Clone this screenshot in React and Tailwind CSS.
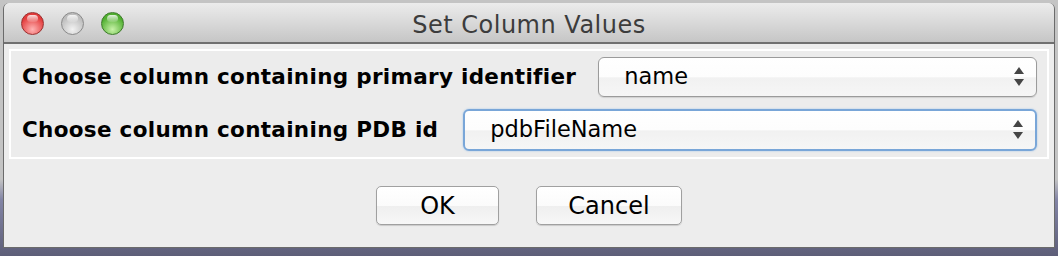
import React from "react";

const Light = ({ from, to, ring }) => (
  <span
    className={`relative block w-[23px] h-[23px] rounded-full border ${ring}`}
    style={{
      background: `radial-gradient(circle at 50% 78%, ${to} 0%, ${from} 68%)`,
    }}
  >
    <span className="absolute left-[5px] top-[2px] w-[11px] h-[7px] rounded-full bg-[linear-gradient(rgba(255,255,255,0.85),rgba(255,255,255,0.1))]" />
  </span>
);

const Arrows = () => (
  <svg width="12" height="22" viewBox="0 0 12 22" className="shrink-0">
    <path d="M6 1 L11 8 L1 8 Z" fill="#454545" />
    <path d="M1 13 L11 13 L6 20 Z" fill="#454545" />
  </svg>
);

const Combo = ({ value, focused }) => (
  <div
    className={`flex-1 flex items-center justify-between pl-[25px] pr-[11px] rounded-[6px] bg-[linear-gradient(#ffffff_0%,#fdfdfd_50%,#f1f1f1_52%,#f6f6f6_100%)] ${
      focused
        ? "h-[42px] border-2 border-[#79a6d8] shadow-[0_0_2px_#9cc0e8]"
        : "h-[40px] border border-[#9b9b9b] shadow-[0_1px_1px_rgba(0,0,0,0.12)]"
    }`}
  >
    <span className="text-[22.5px] text-black">{value}</span>
    <Arrows />
  </div>
);

const Button = ({ children, w }) => (
  <button
    className={`${w} h-[39px] rounded-[5px] border border-[#a0a0a0] bg-[linear-gradient(#ffffff_0%,#fbfbfb_50%,#efefef_52%,#f7f7f7_100%)] shadow-[0_1px_1px_rgba(0,0,0,0.15)] text-[24px] text-black flex items-center justify-center`}
  >
    {children}
  </button>
);

export default function App() {
  return (
    <div
      className="w-[1058px] h-[256px] px-[3px] pt-[3px] bg-[linear-gradient(#c4c4c4_0%,#c4c4c4_70%,#8385a6_78%,#5d5e78_100%)]"
      style={{ fontFamily: '"DejaVu Sans", "Liberation Sans", sans-serif' }}
    >
      <div className="h-[245px] flex flex-col rounded-t-[6px] border-x border-b border-[#6b6b6b] overflow-hidden">
        <div className="h-[41px] shrink-0 relative flex items-center justify-center bg-[linear-gradient(#ececec,#c6c6c6)] border-b-2 border-[#707070]">
          <div className="absolute left-[17px] top-[9px] flex gap-[17px]">
            <Light from="#e23b3b" to="#ffb3b3" ring="border-[#9a3030]" />
            <Light from="#bdbdbd" to="#f2f2f2" ring="border-[#8a8a8a]" />
            <Light from="#4fae2f" to="#c8f2a8" ring="border-[#3d7a2a]" />
          </div>
          <span className="text-[24px] tracking-[0.5px] text-[#3c3c3c] mt-[4px]">Set Column Values</span>
        </div>

        <div className="flex-1 bg-[#ededed] flex flex-col pt-[5px] px-[5px]">
          <div className="border-2 border-white bg-[#ececec] pl-[11px] pr-[10px] py-[6px] flex flex-col gap-[12px]">
            <div className="flex items-center gap-[22px]">
              <span className="text-[21.5px] tracking-[0.3px] font-bold text-black whitespace-nowrap">
                Choose column containing primary identifier
              </span>
              <Combo value="name" />
            </div>
            <div className="flex items-center gap-[25px]">
              <span className="text-[21.5px] tracking-[0.3px] font-bold text-black whitespace-nowrap">
                Choose column containing PDB id
              </span>
              <Combo value="pdbFileName" focused />
            </div>
          </div>

          <div className="flex justify-center gap-[37px] mt-[27px]">
            <Button w="w-[123px]">OK</Button>
            <Button w="w-[146px]">Cancel</Button>
          </div>
        </div>
      </div>
    </div>
  );
}
